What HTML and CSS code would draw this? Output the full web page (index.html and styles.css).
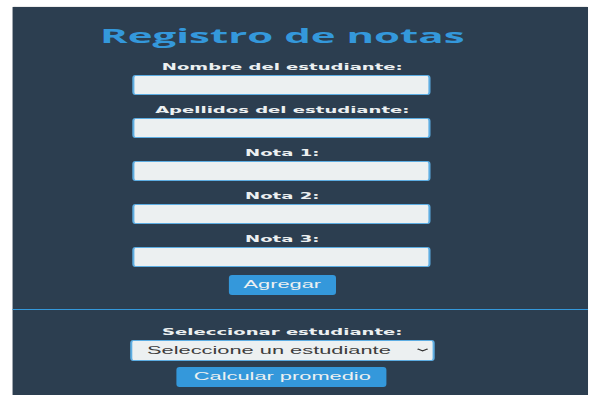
FILE: index.html
```html
<!DOCTYPE html>
<html lang="es">
<head>
<meta charset="utf-8">
<title>Registro de notas</title>
<link rel="stylesheet" href="styles.css">
</head>
<body>
<div class="stage">
  <main class="panel">
    <section class="form-section">
      <h1 class="title">Registro de notas</h1>
      <div class="field">
        <label class="label" for="nombre">Nombre del estudiante:</label>
        <input class="input" id="nombre" type="text">
      </div>
      <div class="field">
        <label class="label" for="apellidos">Apellidos del estudiante:</label>
        <input class="input" id="apellidos" type="text">
      </div>
      <div class="field">
        <label class="label" for="nota1">Nota 1:</label>
        <input class="input" id="nota1" type="text">
      </div>
      <div class="field">
        <label class="label" for="nota2">Nota 2:</label>
        <input class="input" id="nota2" type="text">
      </div>
      <div class="field">
        <label class="label" for="nota3">Nota 3:</label>
        <input class="input" id="nota3" type="text">
      </div>
      <button class="btn btn-add" type="button">Agregar</button>
    </section>
    <hr class="divider">
    <section class="select-section">
      <label class="label" for="estudiante">Seleccionar estudiante:</label>
      <div class="select-wrap">
        <select class="select" id="estudiante">
          <option>Seleccione un estudiante</option>
        </select>
        <svg class="chevron" viewBox="0 0 8 5" aria-hidden="true"><path d="M1 1 L4 3.6 L7 1" fill="none" stroke="#333" stroke-width="1.1"/></svg>
      </div>
      <button class="btn btn-calc" type="button">Calcular promedio</button>
    </section>
  </main>
</div>
</body>
</html>
```

FILE: styles.css
```css
html, body {
  margin: 0;
  padding: 0;
  background: #ffffff;
  overflow: hidden;
}

/* The reference is stretched horizontally by ~2.1x; the page is laid out
   at native width and stretched as one piece. */
.stage {
  width: 285.7px;
  padding: 7px 0 0 5.7px;
  box-sizing: border-box;
  transform: scaleX(2.1);
  transform-origin: 0 0;
}

.panel {
  display: block;
  width: 274.3px;
  height: 388px;
  background: #2c3e50;
  box-shadow: 0 0 1px rgba(0, 0, 0, 0.35);
}

.form-section,
.select-section {
  display: flex;
  flex-direction: column;
  align-items: center;
  padding-right: 16.8px;
}

.form-section {
  padding-top: 16px;
  padding-bottom: 14px;
}

.select-section {
  padding-top: 16px;
}

.title {
  margin: 0 0 13px;
  font-family: "Open Sans", "Segoe UI", sans-serif;
  font-weight: bold;
  font-size: 20px;
  line-height: 25px;
  color: #3498db;
}

.field {
  display: flex;
  flex-direction: column;
  align-items: center;
  margin-bottom: 9px;
}

.field:last-of-type {
  margin-bottom: 8px;
}

.label {
  display: block;
  margin-bottom: 2px;
  font-family: "DejaVu Sans", Verdana, sans-serif;
  font-weight: bold;
  font-size: 8.6px;
  line-height: 12px;
  color: #ecf0f1;
}

.input {
  display: block;
  width: 142px;
  height: 20px;
  margin: 0;
  padding: 0 3px;
  box-sizing: border-box;
  background: #ecf0f1;
  border: 1px solid #5dade2;
  border-radius: 1.5px / 3px;
  outline: none;
}

.btn {
  height: 20px;
  margin: 0;
  padding: 0;
  border: none;
  border-radius: 1.5px / 3px;
  background: #3498db;
  color: #ecf0f1;
  font-family: "Liberation Sans", Arial, sans-serif;
  font-size: 10.4px;
  line-height: 20px;
}

.btn-add {
  width: 51px;
}

.btn-calc {
  width: 100px;
}

.divider {
  margin: 0;
  height: 0;
  border: none;
  border-top: 1px solid #3498db;
}

.select-wrap {
  position: relative;
  margin: 0 0 6px;
}

.select {
  display: block;
  width: 145.7px;
  height: 21px;
  margin: 0;
  padding: 0 0 0 7.4px;
  box-sizing: border-box;
  appearance: none;
  -webkit-appearance: none;
  background: #ecf0f1;
  border: 1px solid #5dade2;
  border-radius: 1.5px / 3px;
  color: #3d3d3d;
  font-family: "Liberation Sans", Arial, sans-serif;
  font-size: 10.4px;
}

.chevron {
  position: absolute;
  right: 3.2px;
  top: 8px;
  width: 6.5px;
  height: 4px;
  pointer-events: none;
}
```
